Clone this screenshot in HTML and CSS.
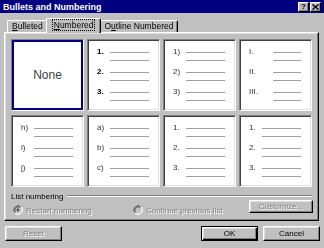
FILE: index.html
```html
<html>

  <head>

    <title>
      Bullets and Numbering
    </title>

    <link rel="stylesheet" href="styles.css">

  </head>

  <body>

  <div class = "dialog">

    <div class = "titlebar">
      <span class = "title">Bullets and Numbering</span>
      <span class = "tbButton helpButton">?</span>
      <span class = "tbButton closeButton">
        <svg width = "7" height = "6" viewBox = "0 0 7 6">
          <path d = "M0.5 0.5 L6.5 5.5 M6.5 0.5 L0.5 5.5" stroke = "#000" stroke-width = "1.4" fill = "none"/>
        </svg>
      </span>
    </div>

    <div class = "tabs">
      <div class = "tab"><u>B</u>ulleted</div>
      <div class = "tab active"><span class = "focus"><u>N</u>umbered</span></div>
      <div class = "tab">O<u>u</u>tline Numbered</div>
    </div>

    <div class = "panel">

      <div class = "grid">

        <div class = "preview selected">
          <span class = "noneText">None</span>
        </div>

        <div class = "preview">
          <div class = "item bold"><span class = "num">1.</span><div class = "lines"><div class = "line"></div><div class = "line"></div></div></div>
          <div class = "item bold"><span class = "num">2.</span><div class = "lines"><div class = "line"></div><div class = "line"></div></div></div>
          <div class = "item bold"><span class = "num">3.</span><div class = "lines"><div class = "line"></div><div class = "line"></div></div></div>
        </div>

        <div class = "preview">
          <div class = "item"><span class = "num">1)</span><div class = "lines"><div class = "line"></div><div class = "line"></div></div></div>
          <div class = "item"><span class = "num">2)</span><div class = "lines"><div class = "line"></div><div class = "line"></div></div></div>
          <div class = "item"><span class = "num">3)</span><div class = "lines"><div class = "line"></div><div class = "line"></div></div></div>
        </div>

        <div class = "preview roman">
          <div class = "item"><span class = "num">I.</span><div class = "lines"><div class = "line"></div><div class = "line"></div></div></div>
          <div class = "item"><span class = "num">II.</span><div class = "lines"><div class = "line"></div><div class = "line"></div></div></div>
          <div class = "item"><span class = "num">III.</span><div class = "lines"><div class = "line"></div><div class = "line"></div></div></div>
        </div>

        <div class = "preview">
          <div class = "item"><span class = "num">h)</span><div class = "lines"><div class = "line"></div><div class = "line"></div></div></div>
          <div class = "item"><span class = "num">i)</span><div class = "lines"><div class = "line"></div><div class = "line"></div></div></div>
          <div class = "item"><span class = "num">j)</span><div class = "lines"><div class = "line"></div><div class = "line"></div></div></div>
        </div>

        <div class = "preview">
          <div class = "item"><span class = "num">a)</span><div class = "lines"><div class = "line"></div><div class = "line"></div></div></div>
          <div class = "item"><span class = "num">b)</span><div class = "lines"><div class = "line"></div><div class = "line"></div></div></div>
          <div class = "item"><span class = "num">c)</span><div class = "lines"><div class = "line"></div><div class = "line"></div></div></div>
        </div>

        <div class = "preview">
          <div class = "item"><span class = "num">1.</span><div class = "lines"><div class = "line"></div><div class = "line"></div></div></div>
          <div class = "item"><span class = "num">2.</span><div class = "lines"><div class = "line"></div><div class = "line"></div></div></div>
          <div class = "item"><span class = "num">3.</span><div class = "lines"><div class = "line"></div><div class = "line"></div></div></div>
        </div>

        <div class = "preview">
          <div class = "item"><span class = "num">1.</span><div class = "lines"><div class = "line"></div><div class = "line"></div></div></div>
          <div class = "item"><span class = "num">2.</span><div class = "lines"><div class = "line"></div><div class = "line"></div></div></div>
          <div class = "item"><span class = "num">3.</span><div class = "lines"><div class = "line"></div><div class = "line"></div></div></div>
        </div>

      </div>

      <div class = "group">

        <div class = "groupHead">
          <span class = "groupLabel">List numbering</span>
          <div class = "groupLine"></div>
        </div>

        <div class = "groupBody">
          <div class = "radio first">
            <svg width = "10" height = "10" viewBox = "0 0 10 10">
              <circle cx = "5" cy = "5" r = "4" fill = "#c0c0c0"/>
              <path d = "M1.82 8.18 A4.5 4.5 0 0 1 8.18 1.82" stroke = "#808080" fill = "none"/>
              <path d = "M8.18 1.82 A4.5 4.5 0 0 1 1.82 8.18" stroke = "#fff" fill = "none"/>
              <path d = "M2.53 7.47 A3.5 3.5 0 0 1 7.47 2.53" stroke = "#404040" fill = "none"/>
              <path d = "M7.47 2.53 A3.5 3.5 0 0 1 2.53 7.47" stroke = "#dfdfdf" fill = "none"/>
              <circle cx = "5" cy = "5" r = "1.4" fill = "#505050"/>
            </svg>
            <span class = "disabledText">Restart numbering</span>
          </div>
          <div class = "radio">
            <svg width = "10" height = "10" viewBox = "0 0 10 10">
              <circle cx = "5" cy = "5" r = "4" fill = "#c0c0c0"/>
              <path d = "M1.82 8.18 A4.5 4.5 0 0 1 8.18 1.82" stroke = "#808080" fill = "none"/>
              <path d = "M8.18 1.82 A4.5 4.5 0 0 1 1.82 8.18" stroke = "#fff" fill = "none"/>
              <path d = "M2.53 7.47 A3.5 3.5 0 0 1 7.47 2.53" stroke = "#404040" fill = "none"/>
              <path d = "M7.47 2.53 A3.5 3.5 0 0 1 2.53 7.47" stroke = "#dfdfdf" fill = "none"/>
            </svg>
            <span class = "disabledText">Continue previous list</span>
          </div>
          <div class = "button customize"><span class = "disabledText">Customize...</span></div>
        </div>

      </div>

    </div>

    <div class = "footer">
      <div class = "button"><span class = "disabledText">Reset</span></div>
      <div class = "button default okButton">OK</div>
      <div class = "button cancelButton">Cancel</div>
    </div>

  </div>

  </body>

</html>
```

FILE: styles.css
```css
body
{
  margin: 0;
  font-family: "Liberation Sans", Arial, sans-serif;
}

.dialog
{
  width: 324px;
  height: 248px;
  background: #c0c0c0;
  font-size: 8px;
  color: #000;
  overflow: hidden;
}

.titlebar
{
  display: flex;
  align-items: center;
  height: 13px;
  padding: 0 3px 0 3px;
  background: #000080;
}

.title
{
  flex: 1;
  color: #fff;
  font-weight: bold;
  font-size: 9px;
}

.tbButton
{
  display: flex;
  align-items: center;
  justify-content: center;
  width: 11px;
  height: 10px;
  box-sizing: border-box;
  background: #c0c0c0;
  border: 1px solid;
  border-color: #fff #000 #000 #fff;
  box-shadow: inset -1px -1px #808080;
  font-weight: bold;
  font-size: 8px;
  line-height: 8px;
}

.closeButton
{
  margin-left: 1px;
}

/* keep small text grey, without coloured fringes */
.tabs, .item, .group, .footer
{
  filter: grayscale(1);
}

.tabs
{
  display: flex;
  align-items: flex-end;
  height: 19px;
  padding-left: 7px;
  position: relative;
  z-index: 1;
}

.tab
{
  height: 12px;
  box-sizing: border-box;
  padding: 0 4px;
  border: 1px solid;
  border-color: #fff #000 transparent #fff;
  border-bottom: none;
  border-radius: 2px 2px 0 0;
  box-shadow: inset -1px 0 #808080;
  font-size: 8.5px;
  line-height: 11px;
}

.tab.active
{
  height: 15px;
  margin: 0 -2px -1px -2px;
  padding: 1px 6px 0 6px;
  background: #c0c0c0;
  position: relative;
  z-index: 2;
}

.focus
{
  outline: 1px dotted #000;
  padding: 0 1px;
}

.panel
{
  height: 189px;
  box-sizing: border-box;
  margin: 0 5px 0 4px;
  padding: 6px 5px 0 6px;
  border: 1px solid;
  border-color: #fff #000 #000 #fff;
  box-shadow: inset -1px -1px #808080, inset 1px 1px #dfdfdf;
}

.grid
{
  display: grid;
  grid-template-columns: repeat(4, 73px);
  grid-template-rows: 72px 72px;
  gap: 4px 3px;
}

.preview
{
  box-sizing: border-box;
  background: #fff;
  border: 1px solid;
  border-color: #808080 #fff #fff #808080;
  box-shadow: inset 1px 1px #404040, inset -1px -1px #dfdfdf;
  padding: 8px 10px 0 9px;
}

.preview.selected
{
  display: flex;
  align-items: center;
  justify-content: center;
  padding: 0;
  box-shadow: inset 0 0 0 2px #000080;
}

.noneText
{
  font-size: 12px;
  color: #404040;
}

.item
{
  display: flex;
  height: 20px;
}

.num
{
  width: 13px;
  line-height: 8px;
  color: #303030;
}

.roman .num
{
  width: 24px;
}

.bold .num
{
  font-weight: bold;
  color: #000;
}

.lines
{
  flex: 1;
  padding-top: 4px;
}

.line
{
  height: 1px;
  background: #a0a0a0;
  margin-bottom: 7px;
}

.group
{
  margin-top: 4px;
}

.groupHead
{
  display: flex;
  align-items: center;
  height: 10px;
}

.groupLine
{
  flex: 1;
  margin: 0 1px 0 4px;
  border-top: 1px solid #808080;
  border-bottom: 1px solid #fff;
}

.groupBody
{
  display: flex;
  align-items: flex-start;
  margin-top: -2px;
}

.radio
{
  display: flex;
  align-items: center;
  gap: 3px;
  height: 10px;
  margin-top: 6px;
}

.radio.first
{
  width: 120px;
  margin-left: 2px;
}

.disabledText
{
  color: #808080;
  text-shadow: 1px 1px #fff;
}

.button
{
  display: flex;
  align-items: center;
  justify-content: center;
  width: 57px;
  height: 15px;
  box-sizing: border-box;
  border: 1px solid;
  border-color: #fff #000 #000 #fff;
  box-shadow: inset -1px -1px #808080, inset 1px 1px #dfdfdf;
}

.button.default
{
  border-color: #000;
  box-shadow: inset 1px 1px #fff, inset -1px -1px #000, inset -2px -2px #808080, inset 2px 2px #dfdfdf;
}

.customize
{
  width: 64px;
  height: 13px;
  margin-left: auto;
  margin-top: 1px;
}

.footer
{
  display: flex;
  height: 15px;
  margin-top: 5px;
  padding: 0 4px 0 5px;
}

.okButton
{
  margin-left: auto;
}

.cancelButton
{
  margin-left: 5px;
}
```
